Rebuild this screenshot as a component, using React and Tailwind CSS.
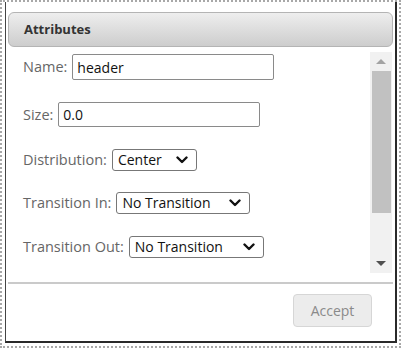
const Chevron = () => (
  <svg width="12" height="8" viewBox="0 0 12 8" className="shrink-0">
    <polyline points="1.5,1.5 6,6 10.5,1.5" fill="none" stroke="#111" strokeWidth="2.4" strokeLinecap="round" strokeLinejoin="round" />
  </svg>
);

const Select = ({ value, width }) => (
  <div
    className={`flex h-[22px] items-center justify-between rounded-[3px] border border-[#777] bg-white pl-[5px] pr-[8px] text-[14px] text-[#111] ${width}`}
  >
    <span className="leading-none">{value}</span>
    <Chevron />
  </div>
);

const App = () => {
  return (
    <div
      className="h-[348px] w-[401px] border-2 border-dotted border-[#a8a8a8] bg-white pb-[3px] pl-[3px] pr-[2px]"
      style={{ fontFamily: '"Open Sans", "Noto Sans", sans-serif' }}
    >
      <div className="flex h-full flex-col border-b-2 border-l border-r-2 border-b-[#2a2a2a] border-l-[#444] border-r-[#2a2a2a] bg-white">
        {/* panel header */}
        <div className="mx-[2px] mt-[10px] flex h-[35px] items-center rounded-[6px] border border-[#b4b4b4] bg-gradient-to-b from-[#eeeeee] to-[#cdcdcd] pl-[15px]">
          <span className="text-[13px] font-bold text-[#333]">Attributes</span>
        </div>

        {/* scrollable form */}
        <div className="mt-[5px] flex h-[221px] pr-[3px]">
          <div className="flex-1 overflow-hidden pl-[17px] pt-[2px] text-[14.5px] text-[#666]">
            <div className="flex items-center gap-[5px]">
              <span>Name:</span>
              <div className="flex h-[26px] w-[202px] items-center rounded-[2px] border border-[#8a8a8a] pl-[4px] text-[14px] text-[#111]">
                header
              </div>
            </div>
            <div className="mt-[22px] flex items-center gap-[5px]">
              <span>Size:</span>
              <div className="flex h-[25px] w-[202px] items-center rounded-[2px] border border-[#8a8a8a] pl-[4px] text-[14px] text-[#111]">
                0.0
              </div>
            </div>
            <div className="mt-[22px] flex items-center gap-[5px]">
              <span>Distribution:</span>
              <Select value="Center" width="w-[85px]" />
            </div>
            <div className="mt-[21px] flex items-center gap-[5px]">
              <span>Transition In:</span>
              <Select value="No Transition" width="w-[134px]" />
            </div>
            <div className="mt-[22px] flex items-center gap-[5px]">
              <span>Transition Out:</span>
              <Select value="No Transition" width="w-[135px]" />
            </div>
          </div>

          {/* scrollbar */}
          <div className="flex w-[22px] flex-col items-center bg-[#f1f1f1]">
            <div className="flex h-[19px] items-center justify-center">
              <div className="h-0 w-0 border-x-[5px] border-b-[5px] border-x-transparent border-b-[#a3a3a3]" />
            </div>
            <div className="h-[142px] w-[19px] bg-[#c1c1c1]" />
            <div className="flex-1" />
            <div className="flex h-[19px] items-center justify-center">
              <div className="h-0 w-0 border-x-[5px] border-t-[5px] border-x-transparent border-t-[#505050]" />
            </div>
          </div>
        </div>

        <div className="mx-[2px] mt-[9px] h-[2px] bg-[#cacaca]" />

        <div className="mt-[10px] flex justify-end pr-[23px]">
          <button className="h-[33px] w-[79px] rounded-[4px] border border-[#d6d6d6] bg-[#ececec] text-[14px] text-[#8a8a8a]">
            Accept
          </button>
        </div>
      </div>
    </div>
  );
};

export default App;
